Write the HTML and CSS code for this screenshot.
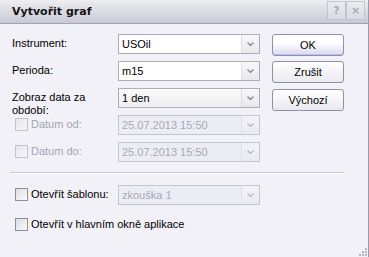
FILE: index.html
```html
<!DOCTYPE html>
<html lang="cs">
<head>
  <meta charset="UTF-8" />
  <title>Vytvořit graf</title>
  <link rel="stylesheet" href="styles.css">
</head>
<body>
  <div class="dialog">
    <div class="titlebar">
      <span class="title">Vytvořit graf</span>
      <div class="tb-buttons">
        <span class="tb-btn">?</span>
        <span class="tb-btn">×</span>
      </div>
    </div>

    <div class="main">
      <div class="form">
        <div class="row">
          <label class="lbl">Instrument:</label>
          <div class="combo"><span class="val">USOil</span><span class="arrow"><svg width="7" height="4" viewBox="0 0 7 4"><polyline points="0.5,0.5 3.5,3.5 6.5,0.5" fill="none" stroke="#8a8c96" stroke-width="1.4"/></svg></span></div>
        </div>
        <div class="row">
          <label class="lbl">Perioda:</label>
          <div class="combo"><span class="val">m15</span><span class="arrow"><svg width="7" height="4" viewBox="0 0 7 4"><polyline points="0.5,0.5 3.5,3.5 6.5,0.5" fill="none" stroke="#8a8c96" stroke-width="1.4"/></svg></span></div>
        </div>
        <div class="row">
          <label class="lbl">Zobraz data za období:</label>
          <div class="combo list"><span class="val">1 den</span><span class="arrow"><svg width="7" height="4" viewBox="0 0 7 4"><polyline points="0.5,0.5 3.5,3.5 6.5,0.5" fill="none" stroke="#8a8c96" stroke-width="1.4"/></svg></span></div>
        </div>
        <div class="row row-wide">
          <label class="lbl chk disabled"><span class="box"></span>Datum od:</label>
          <div class="combo disabled"><span class="val">25.07.2013 15:50</span><span class="arrow"><svg width="7" height="4" viewBox="0 0 7 4"><polyline points="0.5,0.5 3.5,3.5 6.5,0.5" fill="none" stroke="#b8bac4" stroke-width="1.4"/></svg></span></div>
        </div>
        <div class="row">
          <label class="lbl chk disabled"><span class="box"></span>Datum do:</label>
          <div class="combo disabled"><span class="val">25.07.2013 15:50</span><span class="arrow"><svg width="7" height="4" viewBox="0 0 7 4"><polyline points="0.5,0.5 3.5,3.5 6.5,0.5" fill="none" stroke="#b8bac4" stroke-width="1.4"/></svg></span></div>
        </div>
      </div>

      <div class="actions">
        <button class="btn default">OK</button>
        <button class="btn">Zrušit</button>
        <button class="btn">Výchozí</button>
      </div>
    </div>

    <div class="sep"></div>

    <div class="bottom">
      <div class="row">
        <label class="lbl chk"><span class="box"></span>Otevřít šablonu:</label>
        <div class="combo disabled"><span class="val">zkouška 1</span><span class="arrow"><svg width="7" height="4" viewBox="0 0 7 4"><polyline points="0.5,0.5 3.5,3.5 6.5,0.5" fill="none" stroke="#b8bac4" stroke-width="1.4"/></svg></span></div>
      </div>
      <label class="chk single"><span class="box"></span>Otevřít v hlavním okně aplikace</label>
    </div>

    <svg class="grip" width="9" height="9" viewBox="0 0 9 9">
      <rect x="7" y="1" width="2" height="2" fill="#b4b6c4"/>
      <rect x="4" y="4" width="2" height="2" fill="#b4b6c4"/>
      <rect x="7" y="4" width="2" height="2" fill="#b4b6c4"/>
      <rect x="1" y="7" width="2" height="2" fill="#b4b6c4"/>
      <rect x="4" y="7" width="2" height="2" fill="#b4b6c4"/>
      <rect x="7" y="7" width="2" height="2" fill="#b4b6c4"/>
    </svg>
  </div>
</body>
</html>
```

FILE: styles.css
```css
body {
  margin: 0;
  font-family: "Liberation Sans", Arial, sans-serif;
  font-size: 11px;
  color: #000;
  background: #f1f1f7;
}
.dialog {
  width: 369px;
  height: 257px;
  box-sizing: border-box;
  border-right: 1px solid #9a9cae;
  background: #f1f1f7;
  position: relative;
}
.titlebar {
  height: 23px;
  border-bottom: 1px solid #a2a4b4;
  background: linear-gradient(#ededf2, #c8c9d5);
  display: flex;
  align-items: center;
  justify-content: space-between;
  padding: 0 3px 0 12px;
}
.title {
  font-family: "DejaVu Sans", sans-serif;
  font-weight: bold;
  font-size: 11px;
  color: #141414;
  margin-top: -1px;
}
.tb-buttons {
  display: flex;
  margin-top: -3px;
}
.tb-btn {
  width: 19px;
  height: 19px;
  box-sizing: border-box;
  border: 1px solid #c4c5d0;
  background: linear-gradient(#ebecf1, #dadbe3);
  color: #a8aab6;
  font-family: "DejaVu Sans", sans-serif;
  font-weight: bold;
  font-size: 11px;
  display: flex;
  align-items: center;
  justify-content: center;
}
.main {
  display: flex;
  padding: 10px 0 0 12px;
}
.form {
  width: 248px;
}
.row {
  display: flex;
  height: 20px;
  margin-bottom: 7px;
}
.row-wide {
  margin-top: 1px;
}
.lbl {
  width: 106px;
  line-height: 13px;
  padding-top: 3px;
  box-sizing: border-box;
}
.chk {
  display: flex;
  align-items: flex-start;
  gap: 3px;
  padding-left: 3px;
}
.chk.disabled {
  color: #a4a6b2;
}
.box {
  width: 13px;
  height: 13px;
  box-sizing: border-box;
  border: 1px solid #8e8f99;
  background: linear-gradient(135deg, #dcdce2, #fbfbfd);
  flex-shrink: 0;
}
.disabled .box {
  border-color: #c2c3cc;
  background: linear-gradient(135deg, #e6e7ed, #f6f6fa);
}
.combo {
  width: 142px;
  height: 20px;
  box-sizing: border-box;
  border: 1px solid #abaeb9;
  background: #fff;
  display: flex;
}
.combo.list {
  background: linear-gradient(#fafafa, #eeeef0);
}
.combo.disabled {
  background: #ecedf4;
  border-color: #c3c5d0;
  color: #a7a9b6;
}
.val {
  flex: 1;
  padding-left: 3px;
  line-height: 18px;
}
.arrow {
  width: 17px;
  border-left: 1px solid #dedfe5;
  background: linear-gradient(#f8f8f9, #e8e8eb);
  display: flex;
  align-items: center;
  justify-content: center;
}
.disabled .arrow {
  background: linear-gradient(#f3f3f7, #e9eaf0);
}
.actions {
  display: flex;
  flex-direction: column;
  margin-left: 12px;
}
.btn {
  width: 72px;
  height: 22px;
  margin: 0 0 5px;
  border: 1px solid #8f92a5;
  border-radius: 3px;
  background: linear-gradient(#ffffff, #e9e9ef);
  font-family: "Liberation Sans", Arial, sans-serif;
  font-size: 11px;
  color: #000;
  padding: 0;
}
.btn + .btn + .btn {
  margin-top: 1px;
}
.btn.default {
  border-color: #8c8fb0;
  background: linear-gradient(#ffffff 40%, #d8d8f0);
  box-shadow: inset 0 -1px 0 #c0c0ec;
}
.sep {
  margin: 3px 24px 0 10px;
  border-top: 1px solid #c9cad6;
  border-bottom: 1px solid #fbfbfd;
}
.bottom {
  padding: 11px 0 0 12px;
}
.single {
  padding-top: 6px;
  line-height: 13px;
}
.grip {
  position: absolute;
  right: 1px;
  bottom: 1px;
}
```
